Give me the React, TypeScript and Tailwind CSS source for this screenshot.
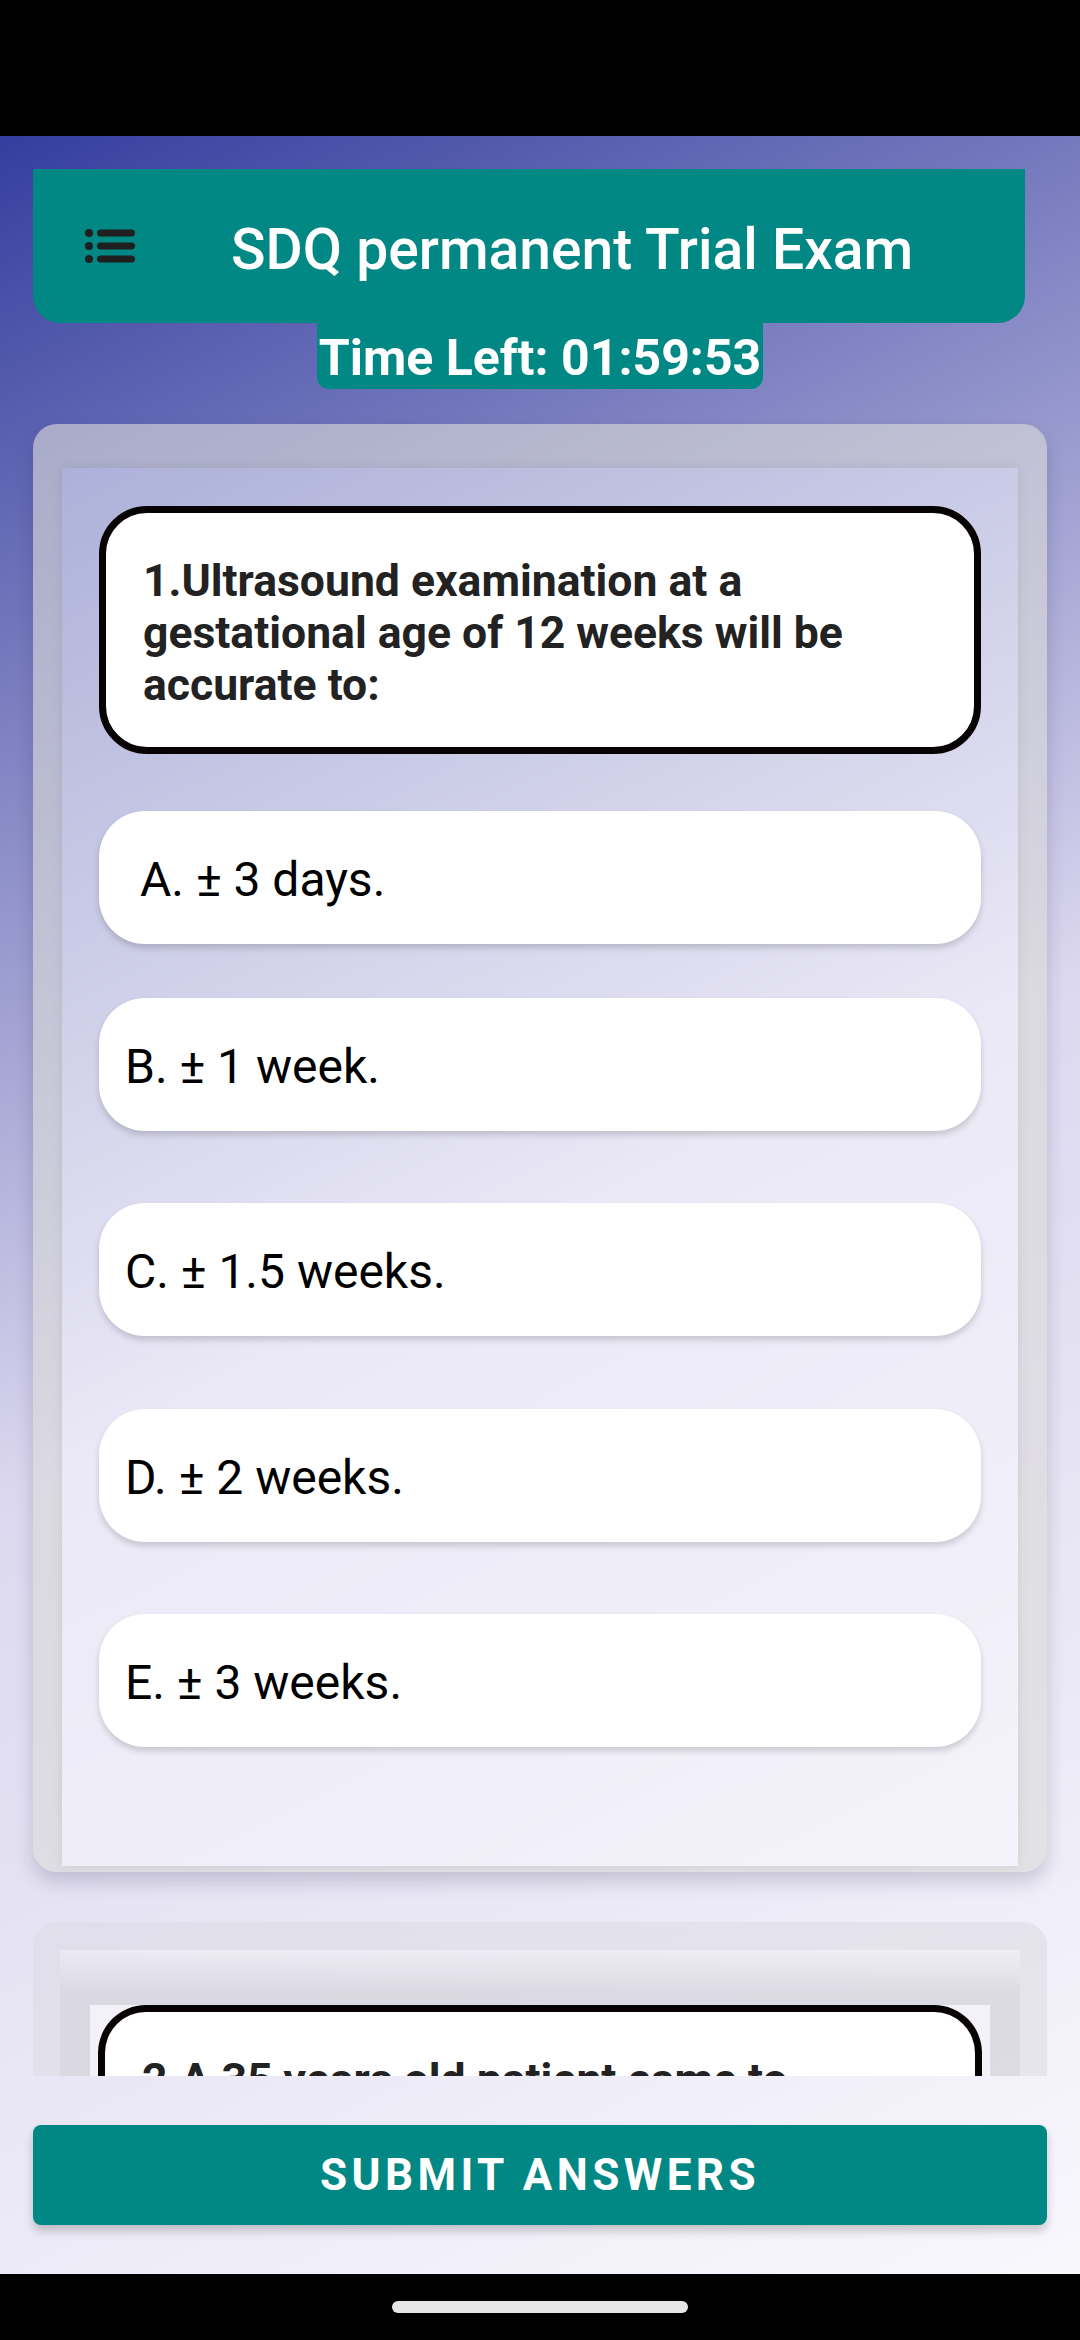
import React from "react";

interface Option {
  label: string;
  className: string;
}

const options: Option[] = [
  { label: "A. ± 3 days.", className: "mt-[57px] pl-[41px]" },
  { label: "B. ± 1 week.", className: "mt-[54px] pl-[26px]" },
  { label: "C. ± 1.5 weeks.", className: "mt-[72px] pl-[26px]" },
  { label: "D. ± 2 weeks.", className: "mt-[73px] pl-[26px]" },
  { label: "E. ± 3 weeks.", className: "mt-[72px] pl-[26px]" },
];

const MenuIcon = () => (
  <svg width="56" height="40" viewBox="0 0 56 40" fill="none">
    {[7, 20, 33].map((y) => (
      <g key={y}>
        <circle cx="7" cy={y} r="4" fill="#1f1f1f" />
        <line
          x1="18.5"
          y1={y}
          x2="49.5"
          y2={y}
          stroke="#1f1f1f"
          strokeWidth="7"
          strokeLinecap="round"
        />
      </g>
    ))}
  </svg>
);

const OptionRow = ({ option }: { option: Option }) => (
  <div
    className={`flex h-[133px] items-center rounded-[46px] bg-white pt-[4px] text-[48px] text-black shadow-[0_4px_6px_rgba(0,0,0,0.16)] ${option.className}`}
  >
    {option.label}
  </div>
);

const App = () => {
  return (
    <div
      className="flex h-[2340px] w-[1080px] flex-col overflow-hidden bg-black"
      style={{ fontFamily: "Roboto, 'Noto Sans', sans-serif" }}
    >
      {/* status bar */}
      <div className="h-[136px] shrink-0 bg-black" />

      <div className="flex h-[2204px] flex-col bg-[linear-gradient(154deg,#343e9e_0%,#dcd8ef_50%,#faf9fd_100%)]">
        {/* header */}
        <div className="ml-[33px] mt-[33px] flex h-[154px] w-[992px] items-center rounded-b-[27px] bg-[#028884] pl-[49px]">
          <MenuIcon />
          <h1 className="ml-[93px] mt-[8px] whitespace-nowrap text-[57px] font-medium text-white">
            SDQ permanent Trial Exam
          </h1>
        </div>
        <div className="flex justify-center">
          <div className="h-[66px] whitespace-nowrap rounded-b-[12px] bg-[#028884] px-[2px] pt-[6px] text-[50px] font-bold leading-[58px] text-white">
            Time Left: 01:59:53
          </div>
        </div>

        {/* questions list */}
        <div className="h-[1687px] shrink-0 overflow-hidden px-[33px] pt-[35px]">
          <div className="rounded-[24px] border-x-[29px] border-b-[6px] border-t-[44px] border-[rgba(218,218,216,0.62)] bg-[rgba(250,249,253,0.5)] bg-clip-padding shadow-[0_10px_18px_rgba(40,30,70,0.18)]">
            <div className="px-[37px] pb-[119px] pt-[38px] shadow-[0_0_10px_rgba(0,0,0,0.08)]">
              <div className="rounded-[48px] border-[7px] border-[#070203] bg-white pb-[36px] pl-[37px] pr-[30px] pt-[42px] text-[44.5px] font-bold leading-[52px] text-[#222]">
                1.Ultrasound examination at a gestational age of 12 weeks will be accurate to:
              </div>
              {options.map((option) => (
                <OptionRow key={option.label} option={option} />
              ))}
            </div>
          </div>

          <div className="mt-[50px] rounded-t-[24px] border-x-[27px] border-t-[28px] border-[rgba(222,221,228,0.6)] bg-[linear-gradient(180deg,rgba(238,237,243,0.7),rgba(214,213,221,0.8)_45px)] bg-clip-padding">
            <div className="mx-[30px] mt-[72px] bg-[#f3f2f8] px-[8px]">
              <div className="-mt-[17px] h-[80px] rounded-t-[48px] border-x-[7px] border-t-[7px] border-[#070203] bg-white pl-[37px] pt-[42px] text-[44.5px] font-bold leading-[52px] text-[#222]">
                <p className="whitespace-nowrap">2.A 35 years old patient came to</p>
              </div>
            </div>
          </div>
        </div>

        {/* submit */}
        <div className="px-[33px] py-[49px]">
          <button className="flex h-[100px] w-full items-center justify-center rounded-[8px] bg-[#028884] text-[44px] font-bold tracking-[0.1em] text-white shadow-[0_6px_10px_rgba(0,0,0,0.2)]">
            SUBMIT ANSWERS
          </button>
        </div>

        {/* nav bar */}
        <div className="flex h-[66px] shrink-0 justify-center bg-black pt-[27px]">
          <div className="h-[12px] w-[296px] rounded-full bg-[#e6e6e6]" />
        </div>
      </div>
    </div>
  );
};

export default App;
